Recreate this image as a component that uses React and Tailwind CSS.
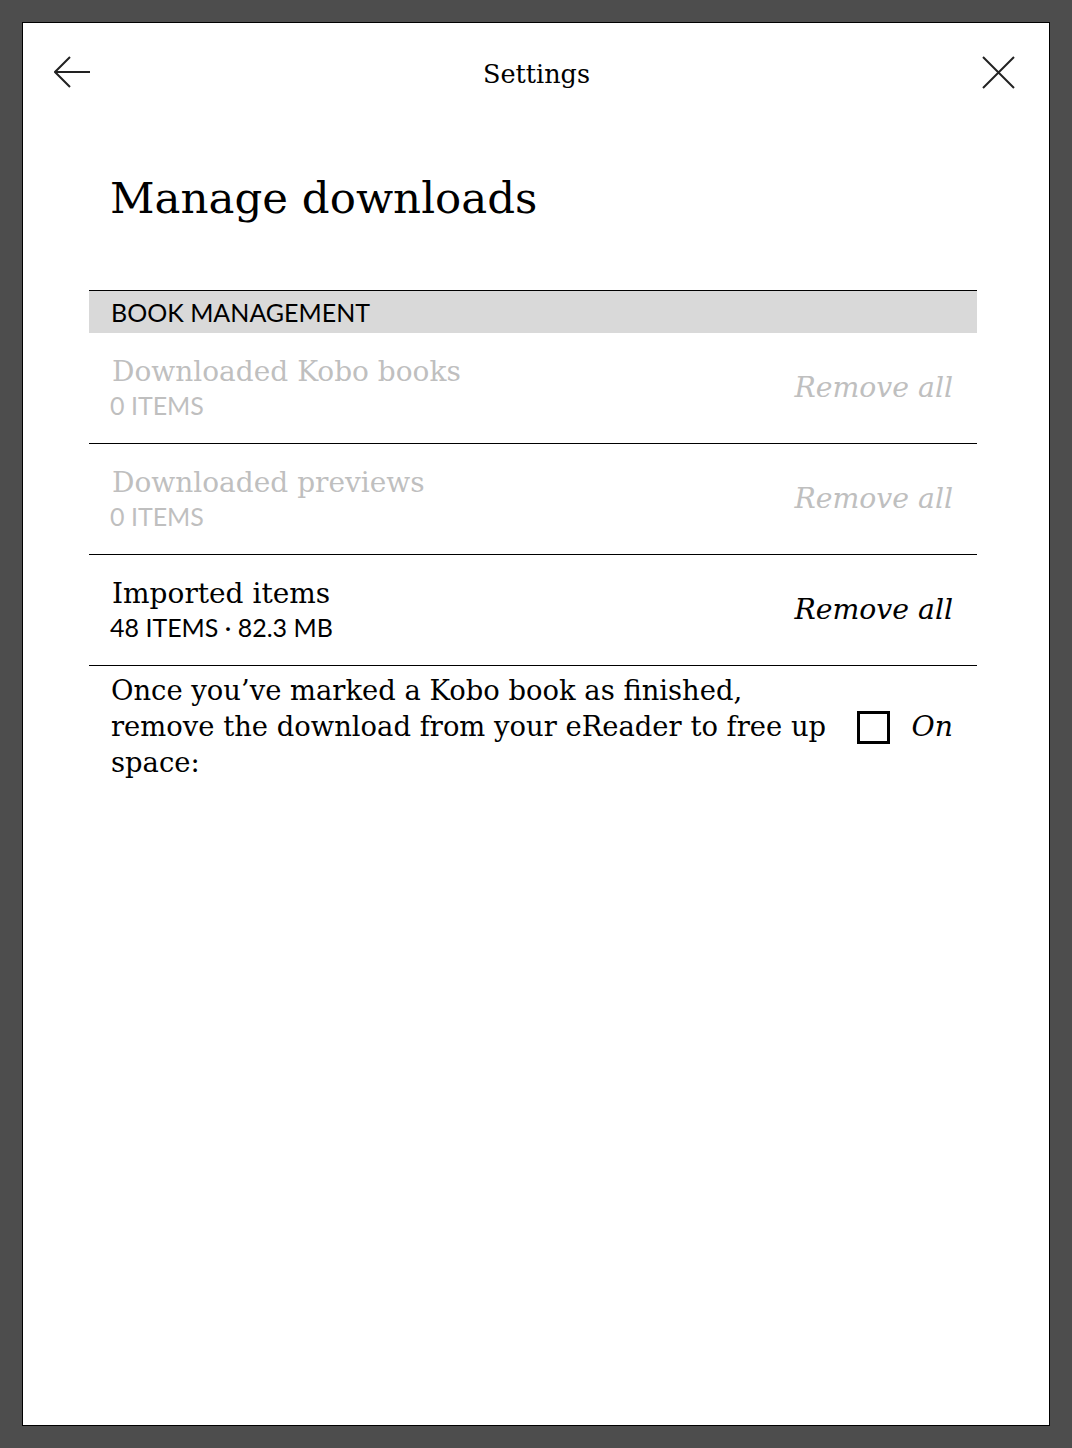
export default function App() {
  const serif = { fontFamily: '"DejaVu Serif", serif' };
  const sans = { fontFamily: 'Lato, "Noto Sans", sans-serif' };

  const rows = [
    { title: 'Downloaded Kobo books', meta: '0 ITEMS', disabled: true },
    { title: 'Downloaded previews', meta: '0 ITEMS', disabled: true },
    { title: 'Imported items', meta: '48 ITEMS · 82.3 MB', disabled: false },
  ];

  return (
    <div className="h-[1448px] w-[1072px] bg-[#4d4d4d] p-[22px]">
      <div className="h-full bg-white border border-black flex flex-col">
        <div className="h-[98px] flex items-center justify-between pl-[31px] pr-[34px]">
          <svg width="37" height="32" viewBox="0 0 37 32" fill="none" stroke="#222" strokeWidth="2">
            <path d="M1 16 H36" />
            <path d="M16 1 L1 16 L16 31" />
          </svg>
          <span className="text-[25.5px] text-black pt-[4px]" style={serif}>Settings</span>
          <svg width="33" height="33" viewBox="0 0 33 33" fill="none" stroke="#222" strokeWidth="2">
            <path d="M1 1 L32 32 M32 1 L1 32" />
          </svg>
        </div>

        <div className="ml-[66px] mr-[72px]">
          <h1 className="pl-[21px] pt-[47px] text-[43.5px] leading-[60px] text-black h-[169px]" style={serif}>
            Manage downloads
          </h1>

          <div className="border-t border-black bg-[#d9d9d9] h-[43px] flex items-center pl-[22px]">
            <span className="text-[25px] leading-[30px] text-black" style={sans}>BOOK MANAGEMENT</span>
          </div>

          {rows.map((r) => (
            <div key={r.title} className="h-[111px] border-b border-black flex items-center justify-between pl-[23px] pr-[24px]">
              <div className={r.disabled ? 'text-[#bfbfbf]' : 'text-black'}>
                <div className="text-[28px] leading-[34px]" style={serif}>{r.title}</div>
                <div className="text-[25px] leading-[32px] -ml-[2px]" style={sans}>{r.meta}</div>
              </div>
              <span className={`text-[28.3px] italic ${r.disabled ? 'text-[#bfbfbf]' : 'text-black'}`} style={serif}>
                Remove all
              </span>
            </div>
          ))}

          <div className="flex items-center justify-between pl-[22px] pr-[24px] pt-[7px]">
            <p className="text-[27.4px] leading-[36px] text-black" style={serif}>
              Once you’ve marked a Kobo book as finished,<br />
              remove the download from your eReader to free up<br />
              space:
            </p>
            <div className="flex items-center gap-[22px]">
              <div className="w-[33px] h-[33px] border-[3px] border-black" />
              <span className="text-[28.3px] italic text-black" style={serif}>On</span>
            </div>
          </div>
        </div>
      </div>
    </div>
  );
}
